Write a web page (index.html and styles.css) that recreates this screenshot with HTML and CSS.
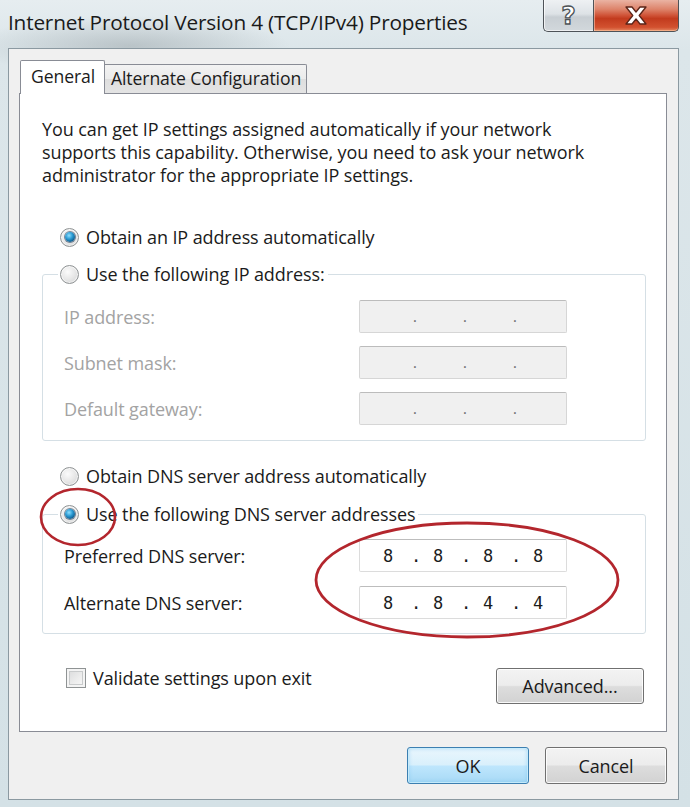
FILE: index.html
```html
<!DOCTYPE html>
<html lang="en">
<head>
<meta charset="utf-8">
<title>Internet Protocol Version 4 (TCP/IPv4) Properties</title>
<link rel="stylesheet" href="styles.css">
</head>
<body>
<div class="window">
  <div class="titlebar">
    <div class="title">Internet Protocol Version 4 (TCP/IPv4) Properties</div>
    <div class="caption-buttons">
      <div class="cap-btn help"><span class="help-glyph">?</span></div>
      <div class="cap-btn close">
        <svg width="22" height="19" viewBox="-1 -1 22 19" aria-hidden="true">
          <polygon points="0,0 6,0 10,5 14,0 20,0 13.2,8.5 20,17 14,17 10,12 6,17 0,17 6.8,8.5" fill="#ffffff" stroke="#5b2418" stroke-width="1.3" stroke-linejoin="round"/>
        </svg>
      </div>
    </div>
  </div>

  <div class="client">
    <div class="tabs">
      <div class="tab active">General</div>
      <div class="tab inactive">Alternate Configuration</div>
    </div>

    <div class="panel">
      <p class="intro">You can get IP settings assigned automatically if your network<br>supports this capability. Otherwise, you need to ask your network<br>administrator for the appropriate IP settings.</p>

      <div class="option row-auto-ip"><span class="radio checked"></span><span>Obtain an IP address automatically</span></div>

      <fieldset class="group group-ip">
        <legend class="option legend"><span class="radio"></span><span>Use the following IP address:</span></legend>
        <div class="field disabled">
          <span class="label">IP address:</span>
          <div class="ipbox"><span class="seg"></span><span class="dot">.</span><span class="seg"></span><span class="dot">.</span><span class="seg"></span><span class="dot">.</span><span class="seg"></span></div>
        </div>
        <div class="field disabled">
          <span class="label">Subnet mask:</span>
          <div class="ipbox"><span class="seg"></span><span class="dot">.</span><span class="seg"></span><span class="dot">.</span><span class="seg"></span><span class="dot">.</span><span class="seg"></span></div>
        </div>
        <div class="field disabled">
          <span class="label">Default gateway:</span>
          <div class="ipbox"><span class="seg"></span><span class="dot">.</span><span class="seg"></span><span class="dot">.</span><span class="seg"></span><span class="dot">.</span><span class="seg"></span></div>
        </div>
      </fieldset>

      <div class="option row-auto-dns"><span class="radio"></span><span>Obtain DNS server address automatically</span></div>

      <fieldset class="group group-dns">
        <legend class="option legend"><span class="radio checked"></span><span>Use the following DNS server addresses</span></legend>
        <div class="field">
          <span class="label">Preferred DNS server:</span>
          <div class="ipbox"><span class="seg">8</span><span class="dot">.</span><span class="seg">8</span><span class="dot">.</span><span class="seg">8</span><span class="dot">.</span><span class="seg">8</span></div>
        </div>
        <div class="field">
          <span class="label">Alternate DNS server:</span>
          <div class="ipbox"><span class="seg">8</span><span class="dot">.</span><span class="seg">8</span><span class="dot">.</span><span class="seg">4</span><span class="dot">.</span><span class="seg">4</span></div>
        </div>
      </fieldset>

      <div class="bottom-row">
        <div class="check-option"><span class="checkbox"></span><span>Validate settings upon exit</span></div>
        <div class="btn advanced">Advanced...</div>
      </div>
    </div>

    <div class="dialog-buttons">
      <div class="btn default">OK</div>
      <div class="btn">Cancel</div>
    </div>
  </div>

  <svg class="annotations" width="690" height="807" viewBox="0 0 690 807" aria-hidden="true">
    <ellipse cx="78" cy="517" rx="37" ry="28" fill="none" stroke="#b3262d" stroke-width="2.6"/>
    <ellipse cx="467" cy="580" rx="151" ry="57" fill="none" stroke="#b3262d" stroke-width="2.8"/>
  </svg>
</div>
</body>
</html>
```

FILE: styles.css
```css
* { box-sizing: border-box; }

html, body {
  margin: 0;
  padding: 0;
}

body {
  width: 690px;
  height: 807px;
  overflow: hidden;
  font-family: "Open Sans", "Noto Sans", "DejaVu Sans", sans-serif;
  color: #1b1b1b;
}

.window {
  position: relative;
  width: 690px;
  height: 807px;
  display: flex;
  flex-direction: column;
  background:
    radial-gradient(ellipse 160px 30px at 130px 46px, rgba(120,130,135,0.35), rgba(120,130,135,0) 100%),
    linear-gradient(180deg, #e6edf0 0%, #dce6ea 50px, #d4e1e6 100%);
}

/* ---------- title bar ---------- */
.titlebar {
  height: 48px;
  display: flex;
  align-items: flex-start;
  padding-left: 8px;
}

.title {
  font-size: 20.8px;
  line-height: 44px;
  letter-spacing: -0.2px;
  color: #1a1a1a;
  white-space: nowrap;
}

.caption-buttons {
  margin-left: auto;
  margin-right: 11px;
  display: flex;
  height: 32px;
}

.cap-btn {
  height: 32px;
  display: flex;
  align-items: center;
  justify-content: center;
  border: 1px solid #4e5358;
  border-top: none;
}

.help {
  width: 50px;
  border-right: none;
  border-bottom-left-radius: 5px;
  background: linear-gradient(180deg, #eef1f3 0%, #dde2e6 45%, #c8ced3 55%, #d2d8dc 100%);
  box-shadow: inset 1px 0 0 rgba(255,255,255,0.7), inset 0 -1px 0 rgba(255,255,255,0.6);
}

.help-glyph {
  font-family: "DejaVu Sans", sans-serif;
  font-weight: bold;
  font-size: 25px;
  line-height: 1;
  color: #ffffff;
  -webkit-text-stroke: 1.3px #4c5257;
  margin-top: -1px;
}

.close {
  width: 86px;
  border-bottom-right-radius: 5px;
  background: linear-gradient(180deg, #eab3a3 0%, #dd836a 30%, #cf5236 50%, #c23b1e 60%, #d2512f 88%, #e48762 100%);
  box-shadow: inset 1px 0 0 rgba(255,220,200,0.5), inset 0 -1px 0 rgba(255,200,160,0.6);
}

/* ---------- client area ---------- */
.client {
  flex: 1;
  margin: 0 11px 7px 8px;
  border: 1px solid #8b99a1;
  background: #f0f0f0;
  padding: 11px 11px 15px 10px;
  display: flex;
  flex-direction: column;
}

.tabs {
  display: flex;
  align-items: flex-end;
  height: 34px;
  margin-bottom: -1px;
  padding-left: 1px;
}

.tab {
  border: 1px solid #898c95;
  border-bottom: none;
  font-size: 17.6px;
  letter-spacing: -0.1px;
  white-space: nowrap;
  color: #1b1b1b;
}

.tab.active {
  position: relative;
  z-index: 1;
  width: 85px;
  height: 34px;
  background: #ffffff;
  padding: 3px 0 0 10px;
  border-radius: 2px 2px 0 0;
}

.tab.inactive {
  width: 202px;
  height: 29px;
  margin-bottom: 1px;
  border-left: none;
  background: linear-gradient(180deg, #f3f3f3 0%, #ebebeb 50%, #dedede 51%, #e4e4e4 100%);
  padding: 1px 0 0 6px;
  border-radius: 0 2px 0 0;
}

.panel {
  height: 639px;
  border: 1px solid #898c95;
  background: #ffffff;
  padding: 24px 0 0 0;
  display: flex;
  flex-direction: column;
}

.intro {
  margin: 0 0 0 22px;
  font-size: 18px;
  line-height: 23px;
  letter-spacing: -0.1px;
}

/* ---------- radio options ---------- */
.option {
  display: flex;
  align-items: center;
  gap: 7px;
  height: 24px;
  font-size: 18px;
  letter-spacing: -0.1px;
  white-space: nowrap;
}

.row-auto-ip { margin: 38px 0 0 40px; }
.row-auto-dns { margin: 23px 0 0 40px; }

.radio {
  flex: none;
  width: 19px;
  height: 19px;
  border-radius: 50%;
  border: 1px solid #8f9394;
  background: radial-gradient(circle at 40% 35%, #fbfbfb 0%, #e9e9e9 45%, #cfd0d1 100%);
  box-shadow: inset 0 0 0 1px rgba(255,255,255,0.6);
  display: flex;
  align-items: center;
  justify-content: center;
}

.radio.checked::after {
  content: "";
  width: 10px;
  height: 10px;
  border-radius: 50%;
  background: radial-gradient(circle at 40% 35%, #8fe0ff 0%, #2c9bd3 40%, #0d5a8c 75%, #0b2f4e 100%);
  box-shadow: 0 0 0 1px rgba(20,50,80,0.55);
}

/* ---------- group boxes ---------- */
.group {
  margin: 13px 20px 0 22px;
  padding: 0 0 15px 0;
  border: 1px solid #d5dfe5;
  border-radius: 3px;
  min-inline-size: 0;
  display: flex;
  flex-direction: column;
  gap: 13px;
}

.group-dns {
  margin-top: 14px;
  padding-bottom: 14px;
  gap: 14px;
}

.legend {
  margin-left: 15px;
  padding: 0 3px 0 2px;
  line-height: 24px;
}

.group-ip .field:first-of-type { margin-top: 14px; }
.group-dns .field:first-of-type { margin-top: 13px; }

.field {
  display: flex;
  align-items: center;
  height: 33px;
  padding-left: 21px;
  font-size: 18px;
  letter-spacing: -0.1px;
}

.field .label {
  width: 295px;
  flex: none;
  white-space: nowrap;
}

.field.disabled .label {
  color: #a3a3a3;
}

.ipbox {
  width: 208px;
  height: 33px;
  display: flex;
  align-items: center;
  padding-left: 5px;
  background: #ffffff;
  border: 1px solid #dcdcdc;
  border-top-color: #bdbdbd;
  border-radius: 2px;
  font-family: "DejaVu Sans Mono", "Liberation Mono", monospace;
  font-size: 17px;
  letter-spacing: 0;
  color: #1b1b1b;
}

.field.disabled .ipbox {
  background: #f0f0f0;
  border-color: #d6d6d6;
  border-top-color: #bcbcbc;
  color: #777777;
}

.seg {
  width: 46px;
  text-align: center;
}

.dot {
  width: 4px;
  text-align: center;
}

.field.disabled .dot {
  font-size: 13px;
  margin-top: 2px;
}

/* ---------- bottom of the panel ---------- */
.bottom-row {
  display: flex;
  align-items: flex-start;
  margin: 34px 22px 0 46px;
}

.check-option {
  display: flex;
  align-items: center;
  gap: 7px;
  height: 20px;
  font-size: 18px;
  letter-spacing: -0.1px;
  white-space: nowrap;
}

.checkbox {
  flex: none;
  width: 20px;
  height: 20px;
  border: 1px solid #8f9394;
  background: linear-gradient(135deg, #d7d8d9 0%, #eeeeee 60%, #fafafa 100%);
  box-shadow: inset 0 0 0 2px #f4f4f4, inset 0 0 0 3px #c9cbcc;
}

.btn {
  width: 122px;
  height: 37px;
  display: flex;
  align-items: center;
  justify-content: center;
  border: 1px solid #707070;
  border-radius: 3px;
  background: linear-gradient(180deg, #f3f3f3 0%, #ececec 48%, #dddddd 52%, #d2d2d2 100%);
  box-shadow: inset 0 0 0 1px rgba(255,255,255,0.85);
  font-size: 18px;
  letter-spacing: -0.1px;
  color: #1b1b1b;
}

.btn.advanced {
  margin-left: auto;
  width: 148px;
  height: 36px;
}

.btn.default {
  border-color: #3c7fb1;
  background: linear-gradient(180deg, #eaf6fd 0%, #d9f0fc 48%, #bee6fd 52%, #a7d9f5 100%);
  box-shadow: inset 0 0 0 1px rgba(200,236,252,0.9), inset 0 0 4px rgba(90,180,235,0.6);
}

.dialog-buttons {
  margin-top: 15px;
  display: flex;
  justify-content: flex-end;
  gap: 16px;
}

/* ---------- annotation overlay ---------- */
.annotations {
  position: absolute;
  left: 0;
  top: 0;
  pointer-events: none;
}
```
